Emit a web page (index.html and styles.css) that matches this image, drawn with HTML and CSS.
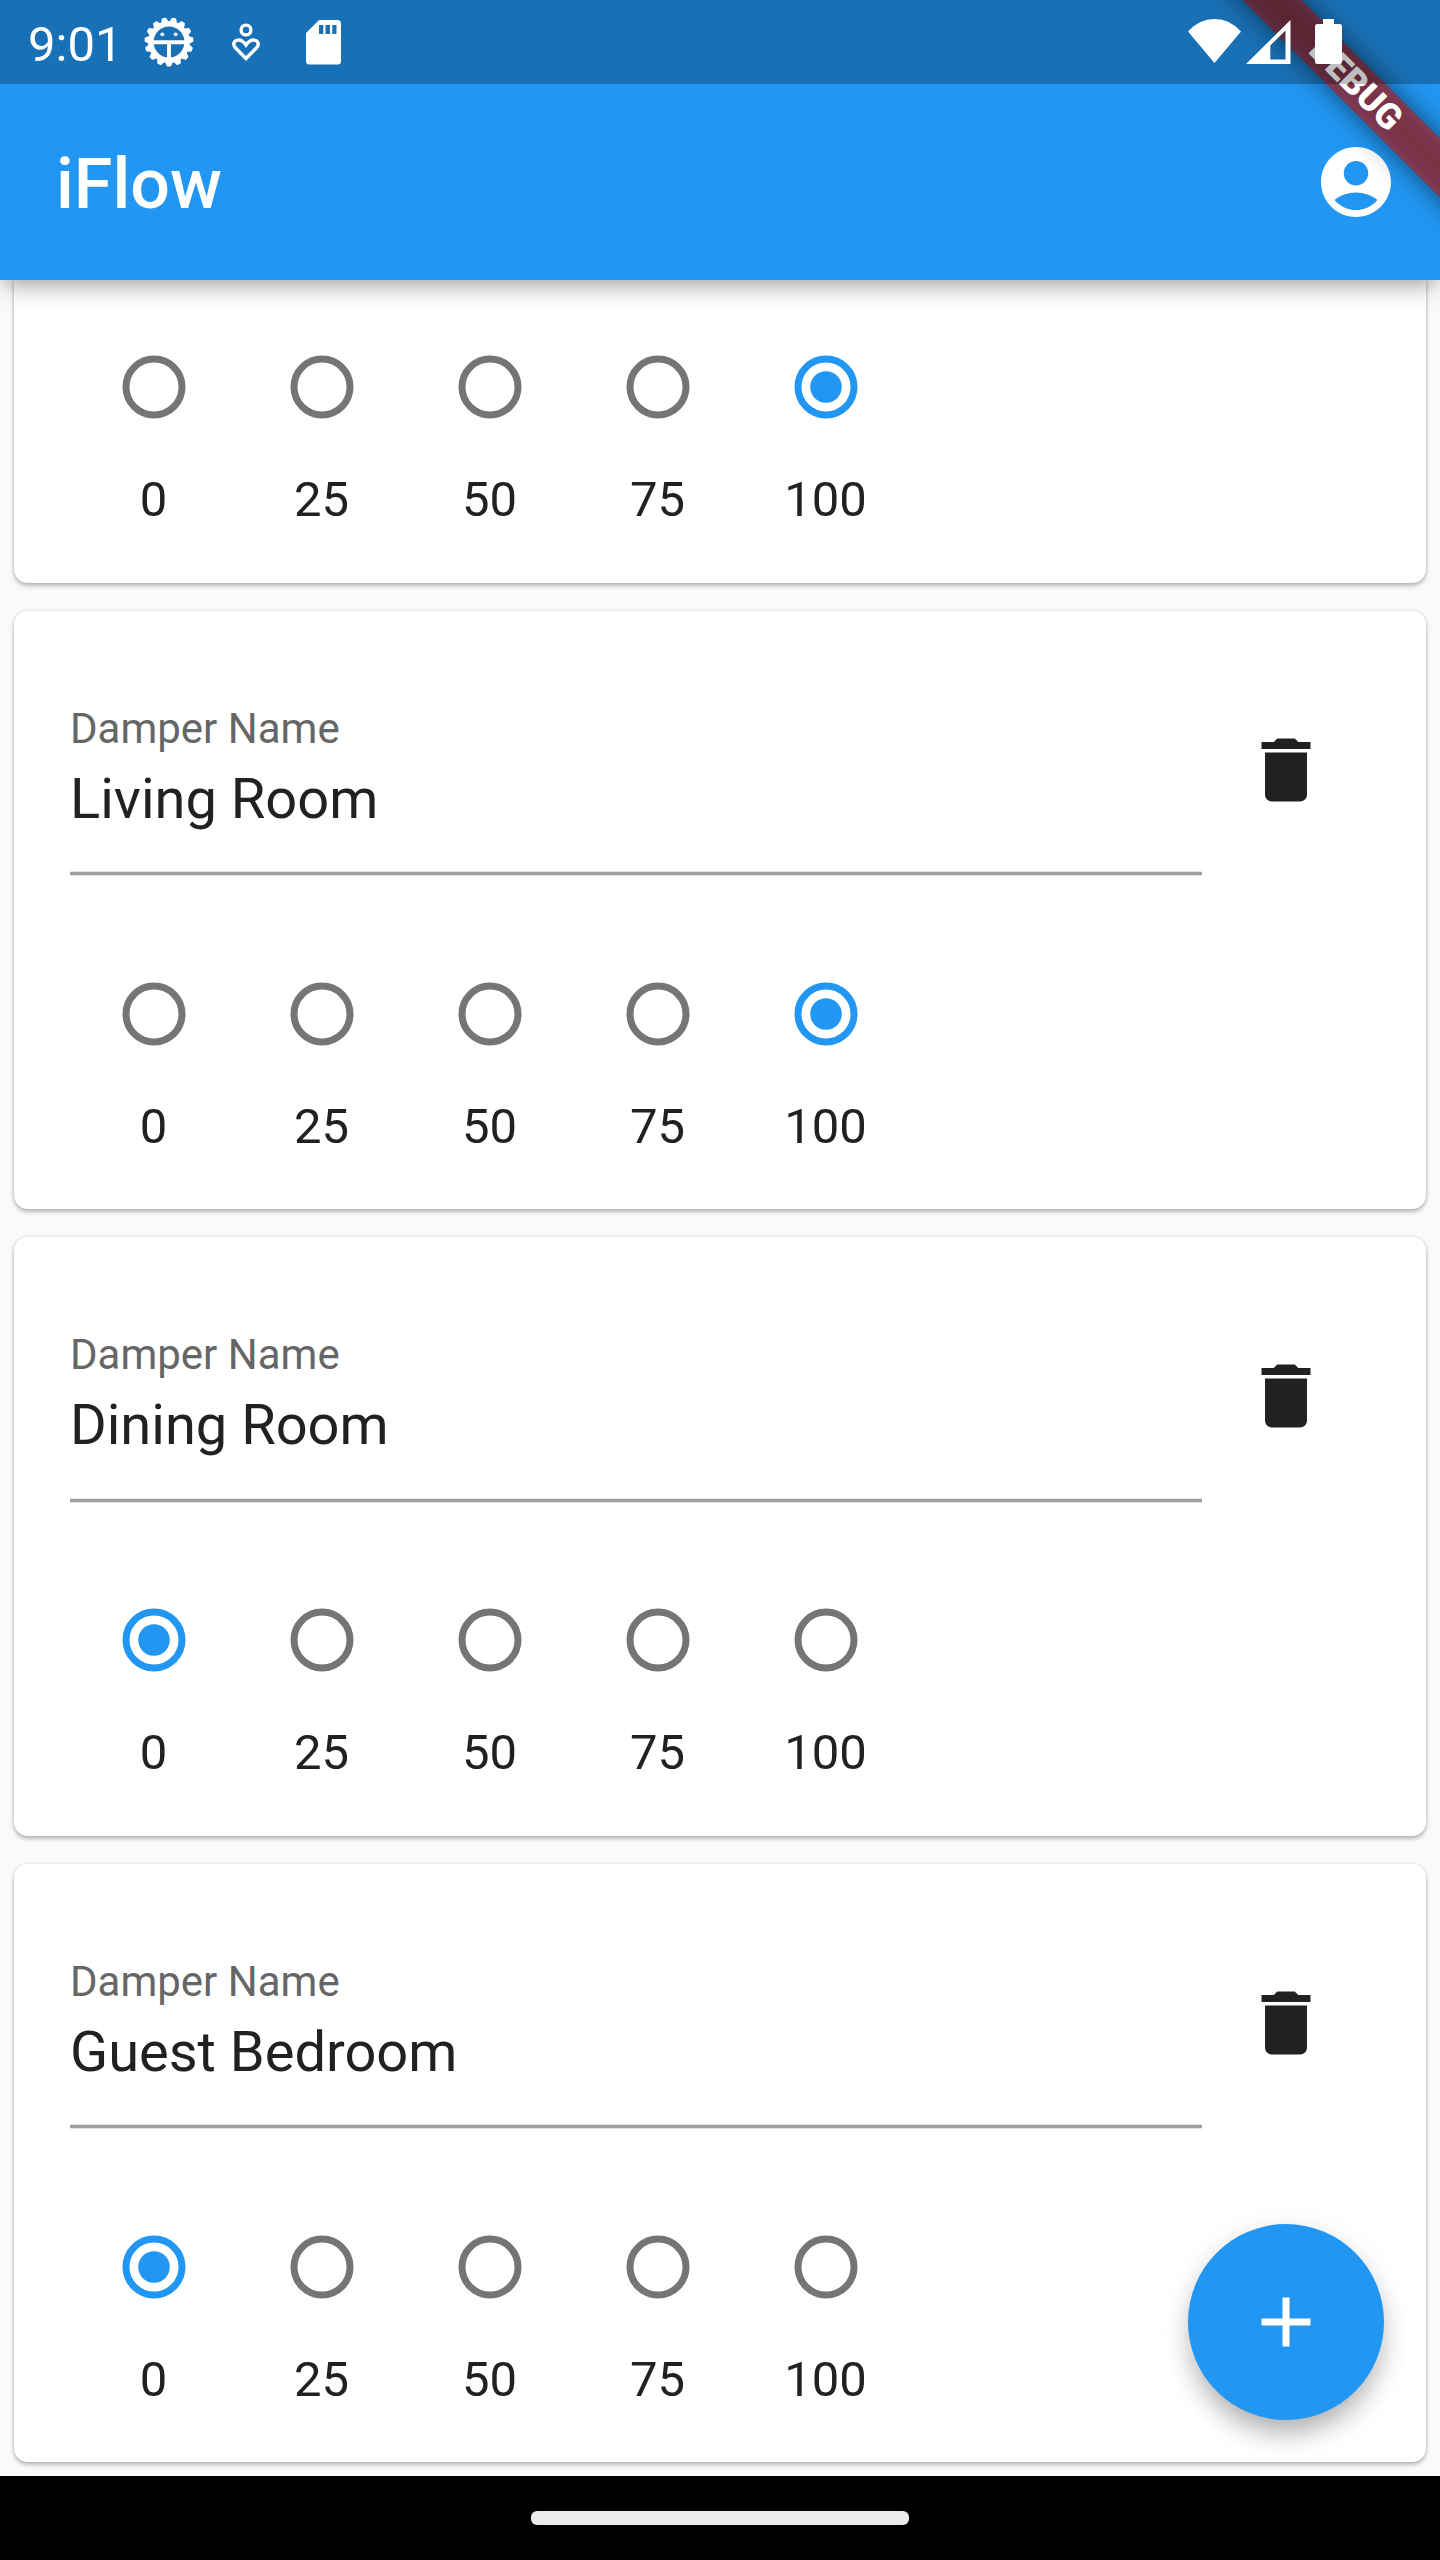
FILE: index.html
```html
<!DOCTYPE html>
<html lang="en">
<head>
<meta charset="utf-8">
<title>iFlow</title>
<link rel="stylesheet" href="styles.css">
</head>
<body>
<div class="screen">
  <header class="top">
    <div class="status">
      <span class="clock">9:01</span>
      <svg class="gear" viewBox="0 0 52 52"><g id="gear" fill="none" stroke="#fff"></g></svg>
      <svg class="care" viewBox="0 0 30 40" fill="none" stroke="#fff" stroke-width="3.4"><circle cx="15" cy="8" r="4.900"/><path d="M15 36.500L4.800 26.200C1.200 22.500 2.700 18.500 6.800 18.100C10.600 17.700 12.600 19.600 15 23C17.400 19.600 19.400 17.700 23.200 18.100C27.300 18.500 28.800 22.500 25.200 26.200Z"/></svg>
      <svg class="sd" viewBox="0 0 36 45"><path fill="#fff" fill-rule="evenodd" d="M13 0H31.5Q35 0 35 3.500V41Q35 44.500 31.500 44.500H3.500Q0 44.500 0 41V13ZM13 5V14H17.300V5ZM19.500 5V14H24V5ZM26.300 5V14H30.500V5Z"/></svg>
      <span class="fill"></span>
      <svg class="wifi" viewBox="0 0 54 45"><path fill="#fff" d="M0 12.500Q11 0 26.500 0T53 12.500L26.500 44Z"/></svg>
      <svg class="signal" viewBox="0 0 45 44"><path fill="#fff" fill-rule="evenodd" d="M0 44L44.500 0V44ZM24.300 25.500V39.500H39.500V10.500Z"/></svg>
      <svg class="battery" viewBox="0 0 27 46"><path fill="#fff" d="M8 0H19V5H24.500Q27 5 27 7.500V42.500Q27 45 24.500 45H2.500Q0 45 0 42.500V7.500Q0 5 2.500 5H8Z"/></svg>
    </div>
    <div class="appbar">
      <h1>iFlow</h1>
      <svg class="icon" viewBox="0 0 24 24"><path fill="#fff" d="M12 2C6.480 2 2 6.480 2 12s4.480 10 10 10 10-4.480 10-10S17.520 2 12 2zm0 4c1.930 0 3.500 1.570 3.500 3.500S13.930 13 12 13s-3.500-1.570-3.500-3.500S10.070 6 12 6zm0 14c-2.030 0-4.430-.820-6.140-2.880C7.550 15.800 9.680 15 12 15s4.450.800 6.140 2.120C16.430 19.180 14.030 20 12 20z"/></svg>
    </div>
    <div class="ribbon-area"><div class="ribbon">DEBUG</div></div>
    <div class="scrim"></div>
  </header>
  <main class="list" id="list"></main>
  <button class="fab" aria-label="Add"><svg class="icon" viewBox="0 0 24 24"><path fill="#fff" d="M19 13h-6v6h-2v-6H5v-2h6V5h2v6h6v2z"/></svg></button>
  <footer class="nav"><div class="pill"></div></footer>
</div>
<script src="app.js"></script>
</body>
</html>
```
FILE: styles.css
```css
* { box-sizing: border-box; }
body { margin: 0; font-family: Roboto, "Liberation Sans", sans-serif; color: #212121; }
svg { display: block; flex: none; }
.screen { position: relative; width: 1440px; height: 2560px; background: #fafafa; overflow: hidden; display: flex; flex-direction: column; }
.top { position: relative; z-index: 2; height: 280px; flex: none; background: #2196f3; color: #fff; box-shadow: 0 13px 20px -4px rgba(0,0,0,.26), 0 2px 14px -2px rgba(0,0,0,.1); }
.status { position: relative; z-index: 3; height: 84px; display: flex; align-items: flex-start; padding: 0 98px 0 28px; }
.clock { width: 115px; font-size: 49px; line-height: 57px; padding-top: 16px; }
.gear { width: 52px; height: 52px; margin: 16px 0 0 0.300px; }
.care { width: 30px; height: 40px; margin: 22px 0 0 36px; }
.sd { width: 36px; height: 45px; margin: 20px 0 0 44.500px; }
.fill { flex: 1; }
.wifi { width: 54px; height: 45px; margin: 19px 3.400px 0 0; }
.signal { width: 45px; height: 44px; margin: 20px 24.300px 0 0; }
.battery { width: 27px; height: 46px; margin-top: 19px; }
.appbar { height: 196px; display: flex; align-items: center; justify-content: space-between; padding: 0 42px 0 56px; }
h1 { margin: 0; padding-top: 4px; font-size: 70px; font-weight: 500; line-height: 82px; }
.icon { width: 84px; height: 84px; }
.ribbon-area { position: absolute; inset: 0; overflow: hidden; z-index: 1; }
.ribbon { position: absolute; left: 1156px; top: 63px; width: 400px; height: 42px; transform: rotate(45deg); background: linear-gradient(rgba(183,28,28,.627), rgba(183,28,28,.627)), linear-gradient(rgba(0,0,0,.25), rgba(0,0,0,.4) 30%, rgba(0,0,0,.43) 50%, rgba(0,0,0,.4) 70%, rgba(0,0,0,.25)); box-shadow: 0 0 28px rgba(0,0,0,.5); text-align: center; font-size: 35.700px; line-height: 42px; font-weight: 900; }
.scrim { position: absolute; z-index: 2; left: 0; right: 0; top: 0; height: 84px; background: rgba(0,0,0,.25); }
.list { flex: 1; min-height: 0; padding: 0 14px; display: flex; flex-direction: column; gap: 28px; }
.card { height: 598.500px; flex: none; background: #fff; border-radius: 14px; box-shadow: 0 3px 4px rgba(0,0,0,.24), 0 0 4px rgba(0,0,0,.12); padding: 90px 56px 0; display: flex; flex-direction: column; }
.card.scrolled { height: 302.500px; border-radius: 0 0 14px 14px; padding-top: 22.500px; }
.head { height: 229px; flex: none; display: flex; }
.field { width: 1132px; height: 175.500px; background: linear-gradient(to top, #e4e4e4 1px, #9e9e9e 1px 4px, #e4e4e4 4px) bottom / 100% 5px no-repeat; }
.label { font-size: 42px; line-height: 50px; padding-top: 3px; color: #666; }
.value { font-size: 56px; line-height: 66px; padding-top: 12px; }
.trash { margin: 27px 0 0 42px; }
.radios { display: flex; }
.option { width: 168px; display: flex; flex-direction: column; align-items: center; font-size: 49px; line-height: 58px; }
.option span { padding-right: 1px; }
.radio { width: 168px; height: 168px; fill: none; stroke: #757575; stroke-width: 7; }
.radio.on { stroke: #2196f3; }
.dot { fill: #2196f3; stroke: none; }
.fab { position: absolute; z-index: 1; left: 1188px; top: 2224px; width: 196px; height: 196px; padding: 0; border: 0; border-radius: 50%; background: #2196f3; display: grid; place-items: center; box-shadow: 0 18px 28px -6px rgba(0,0,0,.27), 0 6px 30px rgba(0,0,0,.1); }
.nav { position: relative; z-index: 2; height: 84px; flex: none; background: #000; display: flex; align-items: center; justify-content: center; }
.pill { width: 378px; height: 14px; border-radius: 6px; background: #ebebeb; }
```
FILE: app.js
```
const levels = [0, 25, 50, 75, 100];
const dampers = [
  { level: 100 },
  { name: "Living Room", level: 100 },
  { name: "Dining Room", level: 0 },
  { name: "Guest Bedroom", level: 0 }
];

const radio = on =>
  `<svg class="radio${on ? " on" : ""}" viewBox="0 0 168 168"><circle cx="84" cy="84" r="28"/>${on ? '<circle class="dot" cx="84" cy="84" r="15.75"/>' : ""}</svg>`;

const head = name => `<div class="head">
  <div class="field"><div class="label">Damper Name</div><div class="value">${name}</div></div>
  <svg class="icon trash" viewBox="0 0 24 24"><path fill="#212121" d="M6 19c0 1.100.900 2 2 2h8c1.100 0 2-.900 2-2V7H6v12zM19 4h-3.500l-1-1h-5l-1 1H5v2h14V4z"/></svg>
</div>`;

document.getElementById("list").innerHTML = dampers.map(d => `<section class="card${d.name ? "" : " scrolled"}">
  ${d.name ? head(d.name) : ""}
  <div class="radios">${levels.map(l => `<div class="option">${radio(l === d.level)}<span>${l}</span></div>`).join("")}</div>
</section>`).join("");

// Toothed wheel with a face: 15 rounded teeth around a ring
let gear = '<circle cx="26" cy="26" r="18.1" stroke-width="5.4"/>';
for (let i = 0; i < 15; i++) {
  const a = (90 + i * 24) * Math.PI / 180;
  const p = (r, t) => `${(26 + r * Math.cos(a + t)).toFixed(2)} ${(26 + r * Math.sin(a + t)).toFixed(2)}`;
  gear += `<path fill="#fff" stroke-width="2" stroke-linejoin="round" d="M${p(19, -.18)}L${p(23.5, -.06)}L${p(23.5, .06)}L${p(19, .18)}Z"/>`;
}
gear += '<path stroke-width="3.9" d="M9 26.200H43M26 26V43"/><g fill="#fff" stroke="none"><circle cx="19.300" cy="18.300" r="1.900"/><circle cx="32.700" cy="18.300" r="1.900"/></g>';
document.getElementById("gear").innerHTML = gear;
```
